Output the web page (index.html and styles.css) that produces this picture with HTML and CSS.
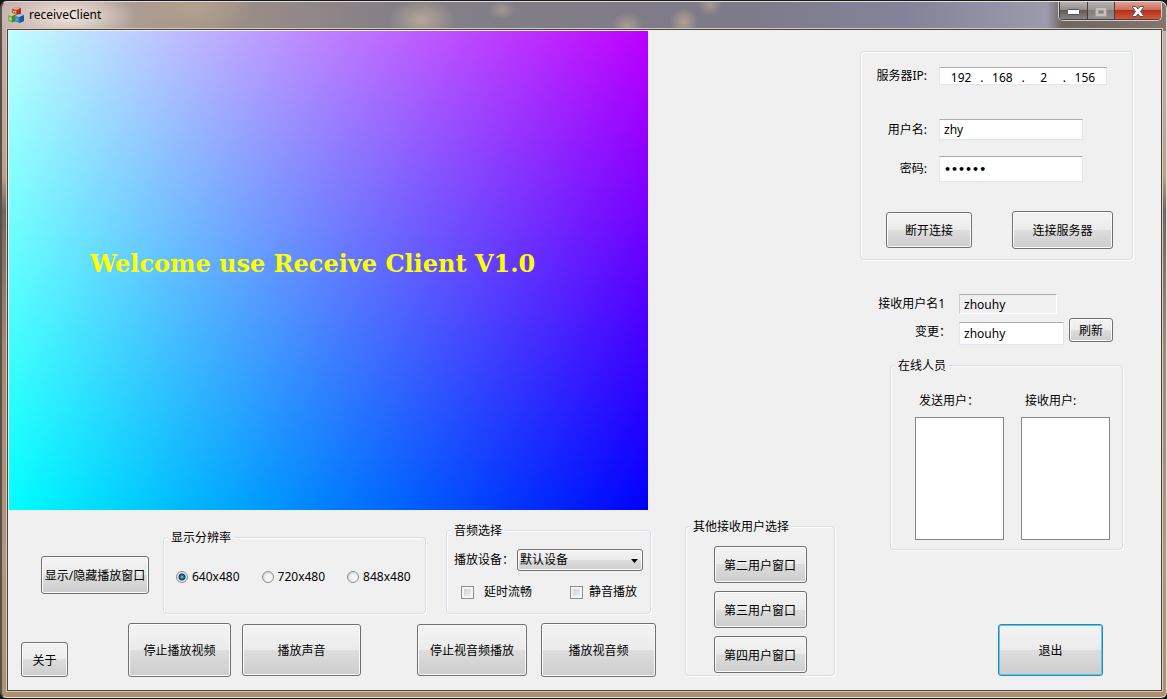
FILE: index.html
```html
<!DOCTYPE html>
<html lang="zh-CN">
<head>
<meta charset="utf-8">
<title>receiveClient</title>
<link rel="stylesheet" href="styles.css">
</head>
<body>
<div class="window">
  <header class="titlebar">
    <svg class="app-icon" width="16" height="16" viewBox="0 0 16 16" aria-hidden="true">
      <path d="M4 2 8 0l5 1v6L9 9 4 7.500z" fill="#d8492f"/>
      <path d="M4 2 8 0l5 1-4 2z" fill="#f0a08c"/>
      <path d="M9 3l4-2v6L9 9z" fill="#b92b1c"/>
      <path d="M0 8l3.500-2L8 7.500V14l-4 1.500L0 14z" fill="#7fb052"/>
      <path d="M0 8l3.500-2L8 7.500 4 9z" fill="#bddb98"/>
      <path d="M4 9l4-1.500V14l-4 1.500z" fill="#4d8431"/>
      <path d="M7 9l4-2 5 1v6l-4.500 2L7 14.500z" fill="#3f86c8"/>
      <path d="M7 9l4-2 5 1-4.500 2z" fill="#a5d0f2"/>
      <path d="M11.500 10 16 8v6l-4.500 2z" fill="#1f5794"/>
      <path d="M5.500 6V4l1 1 1-1v2.500M1.500 13l.7-2.500.8 2.500M9 11.500v2" fill="none" stroke="#fff" stroke-opacity=".7" stroke-width=".7"/>
    </svg>
    <h1 class="title">receiveClient</h1>
    <div class="controls">
      <button class="ctl" type="button" aria-label="最小化">
        <svg width="13" height="6" viewBox="0 0 13 6"><rect x=".5" y=".5" width="12" height="5" rx="1" fill="#fff" stroke="#50505f"/></svg>
      </button>
      <button class="ctl ctl-max" type="button" aria-label="最大化" disabled>
        <svg width="12" height="10" viewBox="0 0 12 10"><path d="M.5.5h11v9H.5zM3.500 3.500h5v3h-5z" fill="#c4c0bd" fill-rule="evenodd" stroke="#a19d9a"/></svg>
      </button>
      <button class="ctl ctl-close" type="button" aria-label="关闭">
        <svg width="12" height="11" viewBox="0 0 12 11"><path d="M.5.5h3.500L6 3 8 .5h3.500v1L8.500 5.500l3 4v1H8L6 8l-2 2.500H.5v-1l3-4-3-4z" fill="#fff" stroke="#54505f"/></svg>
      </button>
    </div>
  </header>

  <main class="client">
    <section class="left">
      <div class="video"><p class="welcome">Welcome use Receive Client V1.0</p></div>
      <div class="console">
        <div class="playback">
          <div class="options">
            <button class="btn btn-toggle" type="button">显示/隐藏播放窗口</button>
            <fieldset class="group group-res">
              <legend>显示分辨率</legend>
              <div class="radios">
                <label class="choice"><input class="radio" type="radio" name="res" checked>640x480</label>
                <label class="choice"><input class="radio" type="radio" name="res">720x480</label>
                <label class="choice"><input class="radio" type="radio" name="res">848x480</label>
              </div>
            </fieldset>
            <fieldset class="group group-audio">
              <legend>音频选择</legend>
              <div class="audio">
                <div class="device">
                  <label for="device">播放设备：</label>
                  <span class="combo">
                    <select id="device"><option>默认设备</option></select>
                    <svg class="arrow" width="7" height="4" viewBox="0 0 7 4" aria-hidden="true"><path d="M0 0h7L3.500 4z"/></svg>
                  </span>
                </div>
                <div class="checks">
                  <label class="choice choice-wide"><input class="check" type="checkbox">延时流畅</label>
                  <label class="choice"><input class="check" type="checkbox">静音播放</label>
                </div>
              </div>
            </fieldset>
          </div>
          <div class="actions">
            <button class="btn btn-about" type="button">关于</button>
            <div class="pair pair-single">
              <button class="btn btn-stop-video" type="button">停止播放视频</button>
              <button class="btn btn-sound" type="button">播放声音</button>
            </div>
            <div class="pair pair-both">
              <button class="btn btn-stop-av" type="button">停止视音频播放</button>
              <button class="btn btn-av" type="button">播放视音频</button>
            </div>
          </div>
        </div>
        <fieldset class="group group-others">
          <legend>其他接收用户选择</legend>
          <div class="others">
            <button class="btn" type="button">第二用户窗口</button>
            <button class="btn" type="button">第三用户窗口</button>
            <button class="btn" type="button">第四用户窗口</button>
          </div>
        </fieldset>
      </div>
    </section>

    <aside class="side">
      <fieldset class="group login">
        <div class="row">
          <span class="label" id="ip-label">服务器IP:</span>
          <div class="ip" role="group" aria-labelledby="ip-label">
            <input aria-label="IP 1" value="192"><span>.</span>
            <input aria-label="IP 2" value="168"><span>.</span>
            <input aria-label="IP 3" value="2"><span>.</span>
            <input aria-label="IP 4" value="156">
          </div>
        </div>
        <div class="row row-user">
          <label class="label" for="user">用户名:</label>
          <input class="field field-user" id="user" type="text" value="zhy">
        </div>
        <div class="row row-pass">
          <label class="label" for="pass">密码:</label>
          <input class="field field-pass" id="pass" type="password" value="123456">
        </div>
        <div class="connect">
          <button class="btn btn-disconnect" type="button">断开连接</button>
          <button class="btn btn-connect" type="button">连接服务器</button>
        </div>
      </fieldset>

      <div class="receiver">
        <div class="row row-current">
          <label class="label" for="current">接收用户名1</label>
          <input class="field field-current" id="current" type="text" value="zhouhy" readonly>
        </div>
        <div class="row row-change">
          <label class="label" for="change">变更：</label>
          <input class="field field-change" id="change" type="text" value="zhouhy">
          <button class="btn btn-refresh" type="button">刷新</button>
        </div>
      </div>

      <fieldset class="group online">
        <legend>在线人员</legend>
        <div class="lists">
          <div class="list"><label for="senders">发送用户：</label><select id="senders" multiple></select></div>
          <div class="list"><label for="receivers">接收用户:</label><select id="receivers" multiple></select></div>
        </div>
      </fieldset>

      <button class="btn btn-exit" type="button">退出</button>
    </aside>
  </main>
</div>
</body>
</html>
```
FILE: styles.css
```css
* { box-sizing: border-box; }

body {
  margin: 0;
  background: #17191c;
  color: #000;
  font: 12px/16px "Noto Sans", "Noto Sans CJK SC", sans-serif;
}

button, input, select { margin: 0; font: inherit; color: inherit; }

/* Window frame */
.window {
  display: flex;
  flex-direction: column;
  min-height: calc(100vh - 2px);
  margin-top: 1px;
  padding: 0 4px 6px 5px;
  border: 1px solid #e4dcd8;
  border-width: 1px 1px 1px 2px;
  border-left-color: #57504d;
  border-radius: 7px 7px 6px 6px;
  background:
    radial-gradient(ellipse 70px 26px at 66px 14px, #f3e6dd, transparent),
    radial-gradient(ellipse 60px 30px at 190px 6px, #b5a08e, transparent),
    radial-gradient(ellipse 34px 22px at 420px 18px, #b5a898, transparent),
    radial-gradient(ellipse 14px 10px at 500px 8px, #a2978f, transparent),
    radial-gradient(ellipse 16px 14px at 625px 24px, #a99b91, transparent),
    radial-gradient(ellipse 14px 14px at 682px 20px, #b3a294, transparent),
    radial-gradient(ellipse 12px 12px at 708px 2px, #a69a92, transparent),
    linear-gradient(90deg, #c4b3ae 0, #a39389 180px, #847f86 390px, #7d7b89 740px, #83829a 900px, #9c9aac 1045px, #6f6660 1060px, #82756c 100%) 0 0 / 100% 29px no-repeat,
    linear-gradient(#c4b4af, #bda184 25%, #71665e 30%, #a38970 50%, #b2977a 80%, #b08f6d);
}

.titlebar {
  display: flex;
  align-items: flex-start;
  height: 27px;
}

.app-icon { margin: 5px 5px 0 1px; }

.title { flex: 1; margin: 5px 0 0; font-size: 12px; font-weight: 400; }

.controls {
  display: flex;
  border: 1px solid #d5d0ce;
  border-top: 0;
  border-radius: 0 0 5px 5px;
  overflow: hidden;
}

.ctl {
  display: flex;
  align-items: center;
  justify-content: center;
  width: 28px;
  height: 18px;
  padding: 2px 0 0;
  border: 1px solid #45403f;
  border-width: 0 0 1px 1px;
  background: linear-gradient(#b9b4b2, #8f8986 50%, #625b58 50%, #8c8480);
}

.ctl-max { width: 27px; background: linear-gradient(#b4afac, #9a9591 50%, #827c78 50%, #96908b); }
.ctl-close { width: 47px; background: linear-gradient(#dfa195, #cb6a58 50%, #b63018 50%, #d0593e); }

/* Client area */
.client {
  display: flex;
  flex: 1;
  justify-content: space-between;
  padding: 1px 28px 12px 1px;
  outline: 1px solid #d2cbc4;
  border: 1px solid #4a423c;
  background: #f0f0f0;
}

.video {
  display: flex;
  align-items: center;
  width: 639px;
  height: 479px;
  background:
    linear-gradient(#be0000, #000),
    linear-gradient(90deg, #0ff, #00f);
  background-blend-mode: screen;
}

.welcome {
  margin: 0 0 14px 81px;
  color: #ff0;
  font: bold 24px/32px "DejaVu Serif", serif;
  white-space: nowrap;
}

/* Etched group boxes */
.group {
  min-width: 0;
  margin: 0;
  padding: 0 4px;
  border: 1px solid #d5dfe5;
  border-radius: 4px;
  box-shadow: 1px 1px 0 #fff, inset 1px 1px 0 #fff;
}

.group legend { padding: 2px 3px 0; background: #f0f0f0; line-height: 14px; }

.btn {
  padding: 2px 0 0;
  border: 1px solid #707070;
  border-radius: 3px;
  background: linear-gradient(#f3f3f3, #ebebeb 50%, #dddddd 50%, #cdcdcd);
  box-shadow: inset 0 0 0 1px #fafafa;
  white-space: nowrap;
}

/* Playback controls under the video */
.console { display: flex; padding: 8px 0 0 12px; }
.options { display: flex; align-items: flex-end; height: 96px; padding-left: 20px; }
.btn-toggle { width: 108px; height: 38px; margin: 0 14px 20px 0; }
.group-res { width: 263px; margin-right: 20px; }
.group-audio { width: 205px; }

.radios { display: flex; gap: 22px; padding: 24px 8px 28px; }
.choice { display: flex; align-items: center; gap: 4px; white-space: nowrap; }

.radio, .check { appearance: none; width: 12px; height: 12px; border: 1px solid #8e8f8f; }
.radio { border-radius: 50%; background: radial-gradient(circle at 60% 60%, #f6f6f6 30%, #c4c8cc 100%); }
.radio:checked { background: radial-gradient(circle, #6fd0f5 0, #1c6b9e 2px, #12364f 3px, #e6eaec 4px); }
.check {
  width: 13px;
  height: 13px;
  background: linear-gradient(135deg, #c5cad2, #f6f6f6);
  box-shadow: inset 0 0 0 2px #f4f4f4;
}

.audio { display: flex; flex-direction: column; gap: 12px; padding: 11px 3px 14px; }
.device { display: flex; align-items: center; justify-content: space-between; white-space: nowrap; }
.combo { position: relative; display: flex; width: 126px; }
.combo select {
  appearance: none;
  width: 100%;
  height: 22px;
  padding: 0 2px;
  border: 1px solid #707070;
  border-radius: 3px;
  background: linear-gradient(#f2f2f2, #ebebeb 50%, #dddddd 50%, #cfcfcf);
  box-shadow: inset 0 0 0 1px #fafafa;
}
.arrow { position: absolute; top: 10px; right: 5px; }
.checks { display: flex; justify-content: space-between; padding: 0 6px 0 7px; }
.checks .choice { gap: 6px; padding-top: 2px; line-height: 14px; }
.checks .choice-wide { gap: 10px; }

.actions { display: flex; align-items: flex-end; margin-top: 9px; }
.pair { display: flex; align-items: center; }
.pair-single { gap: 11px; margin: 0 56px 0 60px; }
.pair-both { gap: 14px; }
.btn-about { width: 47px; height: 35px; }
.btn-stop-video { width: 103px; height: 54px; }
.btn-sound { width: 119px; height: 52px; }
.btn-stop-av { width: 110px; height: 52px; }
.btn-av { width: 115px; height: 54px; }

.group-others { width: 150px; height: 158px; margin-left: 29px; }
.others { display: flex; flex-direction: column; align-items: center; gap: 8px; padding-top: 12px; }
.others .btn { width: 93px; height: 37px; }

/* Sidebar */
.side { width: 273px; padding-top: 20px; }
.row { display: flex; align-items: center; }
.label { flex: none; text-align: right; white-space: nowrap; }

.field, .ip {
  border: 1px solid #e2e6ec;
  border-top-color: #abadb3;
  background: #fff;
}
.field { min-width: 0; padding: 0 4px; }
.field:read-only { background: #f0f0f0; border-color: #abadb3 #fff #fff #c9ced6; }

.login { padding: 15px 14px 10px; }
.login .label { width: 52px; margin-right: 12px; }
.ip { display: flex; width: 168px; height: 18px; padding: 2px 2px 0; }
.ip input { flex: 1; min-width: 0; height: 16px; padding: 0; border: 0; background: none; text-align: center; }
.ip span { width: 3px; }
.row-user { margin-top: 34px; }
.row-pass { margin-top: 16px; }
.field-user { width: 144px; height: 21px; }
.field-pass { width: 144px; height: 26px; font: bold 11px/16px "DejaVu Sans", sans-serif; }
.connect { display: flex; align-items: center; gap: 40px; margin-top: 29px; padding-left: 11px; }
.btn-disconnect { width: 86px; height: 36px; }
.btn-connect { width: 101px; height: 38px; }

.receiver { margin-top: 34px; padding-left: 18px; }
.receiver .label { width: 67px; margin-right: 14px; }
.receiver .row-change .label { width: 73px; margin-right: 8px; }
.field-current { width: 98px; height: 20px; }
.row-change { margin-top: 4px; }
.field-change { align-self: flex-end; width: 105px; height: 23px; margin-top: 4px; }
.btn-refresh { align-self: flex-start; width: 44px; height: 24px; margin-left: 5px; }

.online { margin: 12px 10px 0 30px; }
.lists { display: flex; gap: 17px; padding: 20px 0 9px 20px; }
.list { display: flex; flex-direction: column; gap: 8px; }
.list label { padding-left: 4px; }
.list select { appearance: none; width: 89px; height: 123px; border: 1px solid #828790; border-radius: 0; background: #fff; }

.btn-exit {
  display: block;
  width: 105px;
  height: 52px;
  margin: 74px 0 0 138px;
  border-color: #3c7fb1;
  box-shadow: inset 0 0 0 1px #48d0f8;
}
```
